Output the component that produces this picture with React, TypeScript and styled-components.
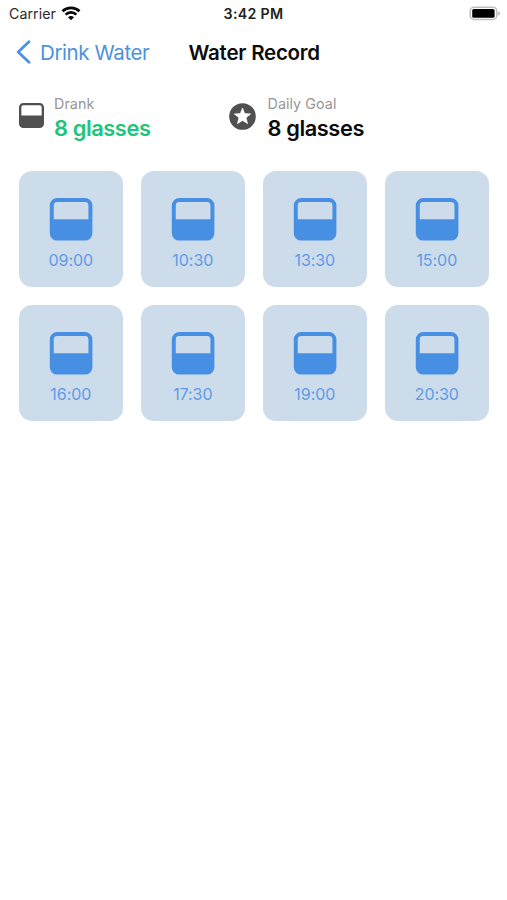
import React from "react";
import styled, { createGlobalStyle } from "styled-components";

const GlobalStyle = createGlobalStyle`
  * { box-sizing: border-box; }
  html, body { margin: 0; background: #fff; }
  body { font-family: Inter, "Liberation Sans", sans-serif; color: #0b0b0b; overflow: hidden; }
`;

const Screen = styled.main`
  width: 507px;
  height: 900px;
  background: #fff;
  overflow: hidden;
`;

const StatusBar = styled.header`
  display: grid;
  grid-template-columns: 1fr auto 1fr;
  align-items: center;
  height: 27px;
  padding: 0 6px;
`;

const Carrier = styled.div`
  display: flex;
  align-items: center;
  gap: 5px;
  padding-left: 3px;
  font-size: 14.2px;
  line-height: 18px;
  letter-spacing: 0.06px;
  color: #2a2a2a;
`;

const Clock = styled.time`
  font-size: 14.2px;
  line-height: 18px;
  font-weight: 600;
  letter-spacing: 0.3px;
  color: #222;
`;

const BatterySlot = styled.div`
  display: flex;
  justify-content: flex-end;
`;

const NavBar = styled.nav`
  display: flex;
  align-items: center;
  height: 50px;
  padding-left: 16px;
`;

const BackButton = styled.button`
  display: flex;
  align-items: center;
  gap: 9px;
  width: 172.5px;
  padding: 0;
  border: 0;
  background: none;
  font: inherit;
  font-size: 20.5px;
  line-height: 26px;
  letter-spacing: -0.4px;
  color: #4b92e2;
  white-space: nowrap;
`;

const BackLabel = styled.span`
  padding-top: 1px;
`;

const Title = styled.h1`
  margin: 0;
  padding-top: 1px;
  font-size: 20.5px;
  line-height: 26px;
  font-weight: 600;
  letter-spacing: -0.23px;
  white-space: nowrap;
`;

const Summary = styled.section`
  display: grid;
  grid-template-columns: 210px 1fr;
  padding: 18px 19px 0;
  height: 93px;
`;

const Stat = styled.div<{ $gap: number }>`
  display: flex;
  align-items: flex-start;
  gap: ${(p) => p.$gap}px;
`;

const StatIcon = styled.div`
  display: flex;
  padding-top: 8px;
`;

const StatLabel = styled.div`
  font-size: 14.3px;
  line-height: 18px;
  letter-spacing: 0.07px;
  color: #969696;
`;

const StatValue = styled.div<{ $color: string }>`
  margin-top: 2px;
  font-size: 21.8px;
  line-height: 26px;
  font-weight: 600;
  letter-spacing: -0.4px;
  color: ${(p) => p.$color};
`;

const Grid = styled.section`
  display: grid;
  grid-template-columns: repeat(4, 103.7px);
  column-gap: 18.3px;
  row-gap: 18.4px;
  padding: 0.6px 0 0 19px;
`;

const Card = styled.article`
  display: flex;
  flex-direction: column;
  align-items: center;
  height: 116px;
  padding-top: 27px;
  border-radius: 13px;
  background: #cddceb;
`;

const CardTime = styled.time`
  margin-top: 8.4px;
  font-size: 16px;
  line-height: 20px;
  letter-spacing: -0.05px;
  color: #5e9be6;
`;

const Glass = ({
  size,
  color,
  fill = "none",
  viewBox = "0 0 43 43",
}: {
  size: number;
  color: string;
  fill?: string;
  viewBox?: string;
}) => (
  <svg width={size} height={size} viewBox={viewBox} aria-hidden="true">
    <rect x="2" y="2" width="39" height="39" rx="5.5" fill={fill} stroke={color} strokeWidth="4" />
    <path d="M2 21.5H41V35.5A5.5 5.5 0 0 1 35.5 41H7.5A5.5 5.5 0 0 1 2 35.5Z" fill={color} />
  </svg>
);

const Star = () => (
  <svg width="27" height="27" viewBox="0 0 27 27" aria-hidden="true">
    <circle cx="13.5" cy="13.5" r="13.3" fill="#505050" />
    <path
      d="M13.5 5L15.7 10.5L21.7 10.9L17.1 14.8L18.6 20.7L13.5 17.5L8.4 20.7L9.9 14.8L5.3 10.9L11.3 10.5Z"
      fill="#fff"
      stroke="#fff"
      strokeWidth="0.6"
      strokeLinejoin="round"
    />
  </svg>
);

const Wifi = () => (
  <svg width="20" height="15" viewBox="0 0 20 15" fill="none" stroke="#080808" strokeWidth="2.7" aria-hidden="true">
    <path d="M1.5 5.2C6.2 0.7 13.8 0.7 18.5 5.2" />
    <path d="M4.6 8.6C7.6 5.7 12.4 5.7 15.4 8.6" />
    <path d="M10 14.2L7 11.2C8.7 9.7 11.3 9.7 13 11.2Z" fill="#080808" stroke="none" />
  </svg>
);

const Battery = () => (
  <svg width="32" height="15" viewBox="0 0 32 15" aria-hidden="true">
    <rect x="1.2" y="1.2" width="26.6" height="12.2" rx="4" fill="#fff" stroke="#bebebe" strokeWidth="1.5" />
    <rect x="3.2" y="3" width="22.4" height="8.8" rx="1.6" fill="#000" />
    <path d="M29.2 5.3Q31 6.1 31 7.4T29.2 9.5Z" fill="#b4b4b4" />
  </svg>
);

const Chevron = () => (
  <svg width="15" height="24" viewBox="0 0 15 24" fill="none" aria-hidden="true">
    <path d="M13 1.8L2.2 12L13 22.2" stroke="#4b92e2" strokeWidth="2.8" strokeLinecap="round" strokeLinejoin="round" />
  </svg>
);

const times = ["09:00", "10:30", "13:30", "15:00", "16:00", "17:30", "19:00", "20:30"];

export default function App() {
  return (
    <Screen>
      <GlobalStyle />
      <StatusBar>
        <Carrier>Carrier<Wifi /></Carrier>
        <Clock>3:42 PM</Clock>
        <BatterySlot><Battery /></BatterySlot>
      </StatusBar>
      <NavBar>
        <BackButton type="button"><Chevron /><BackLabel>Drink Water</BackLabel></BackButton>
        <Title>Water Record</Title>
      </NavBar>
      <Summary>
        <Stat $gap={10}>
          <StatIcon><Glass size={25} color="#505050" fill="#fff" /></StatIcon>
          <div>
            <StatLabel>Drank</StatLabel>
            <StatValue $color="#20c579">8 glasses</StatValue>
          </div>
        </Stat>
        <Stat $gap={11.5}>
          <StatIcon><Star /></StatIcon>
          <div>
            <StatLabel>Daily Goal</StatLabel>
            <StatValue $color="#0b0b0b">8 glasses</StatValue>
          </div>
        </Stat>
      </Summary>
      <Grid>
        {times.map((time) => (
          <Card key={time}>
            <Glass size={44} color="#478fe3" viewBox="-0.8 0 44.4 44.4" />
            <CardTime>{time}</CardTime>
          </Card>
        ))}
      </Grid>
    </Screen>
  );
}
